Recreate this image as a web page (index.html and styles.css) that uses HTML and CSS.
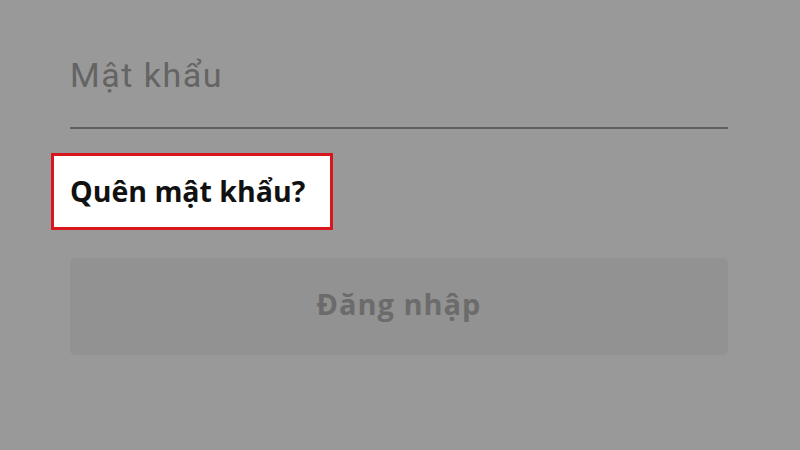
FILE: index.html
```html
<!DOCTYPE html>
<html lang="vi">
<head>
  <meta charset="UTF-8" />
  <meta name="viewport" content="width=device-width, initial-scale=1.0"/>
  <title>Đăng nhập</title>
  <link rel="stylesheet" href="styles.css">
</head>
<body>

  <!-- form đăng nhập (đang bị phủ xám) -->
  <div class="form">
    <div class="field">
      <input type="password" class="pwd" placeholder="Mật khẩu" />
    </div>

    <div class="forgot-row">
      <a class="forgot" href="#">Quên mật khẩu?</a>
    </div>

    <button class="btn" disabled>Đăng nhập</button>
  </div>

</body>
</html>
```

FILE: styles.css
```css
body {
  margin: 0;
  background-color: #999999;
  font-family: 'Open Sans', 'Roboto', sans-serif;
  height: 450px;
  overflow: hidden;
}

.form {
  padding: 0 72px 0 70px;
}

.field {
  box-sizing: border-box;
  height: 129px;
  padding-top: 52px;
  border-bottom: 2px solid #5f5f5f;
}

.pwd {
  width: 100%;
  border: none;
  background: transparent;
  padding: 0;
  margin: 0;
  height: 46px;
  font-family: 'Roboto', sans-serif;
  font-size: 34px;
  letter-spacing: 1.5px;
  color: #5f5f5f;
  outline: none;
}

.pwd::placeholder {
  color: #646464;
}

.forgot-row {
  margin-top: 24px;
}

.forgot {
  display: inline-block;
  margin-left: -19px;
  padding: 0 25px 0 16px;
  height: 71px;
  line-height: 71px;
  background-color: #ffffff;
  border: 3px solid #d9161d;
  color: #111111;
  font-weight: bold;
  font-size: 28.5px;
  text-decoration: none;
}

.btn {
  display: block;
  width: 100%;
  height: 97px;
  margin-top: 28px;
  padding: 0 0 6px;
  border: none;
  border-radius: 5px;
  background-color: #929292;
  color: #6b6b6b;
  font-family: 'Open Sans', 'Roboto', sans-serif;
  font-weight: bold;
  font-size: 29px;
  letter-spacing: 1px;
}
```
